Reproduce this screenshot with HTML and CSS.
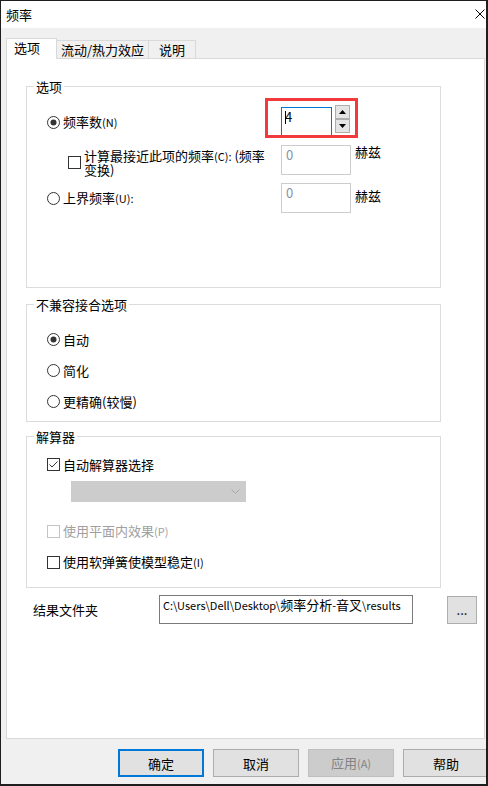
FILE: index.html
```html
<!DOCTYPE html>
<html lang="zh-CN">
<head>
  <meta charset="UTF-8" />
  <title>频率</title>
  <link rel="stylesheet" href="styles.css">
</head>
<body>

<div class="window">
  <div class="titlebar">
    <span class="title">频率</span>
    <svg class="close" width="10" height="10" viewBox="0 0 10 10"><path d="M0.5 0.5 L9.5 9.5 M9.5 0.5 L0.5 9.5" stroke="#000" stroke-width="1" fill="none"/></svg>
  </div>

  <div class="client">
    <div class="tabs">
      <div class="tab active">选项</div>
      <div class="tab t2">流动/热力效应</div>
      <div class="tab t3">说明</div>
    </div>

    <div class="panel">
      <fieldset class="group g1">
        <legend>选项</legend>
        <div class="group-body">
          <div class="row">
            <div class="opt">
              <svg class="radio" width="13" height="13" viewBox="0 0 13 13"><circle cx="6.5" cy="6.5" r="6" fill="#fff" stroke="#333"/><circle cx="6.5" cy="6.5" r="3" fill="#333"/></svg>
              <span>频率数<span class="acc">(N)</span></span>
            </div>
            <div class="spin">
              <div class="spin-input"><span class="caret"></span>4</div>
              <div class="spin-btns">
                <div class="spin-btn"><svg width="7" height="4" viewBox="0 0 7 4"><path d="M0 4 L3.5 0 L7 4 Z" fill="#000"/></svg></div>
                <div class="spin-btn"><svg width="7" height="4" viewBox="0 0 7 4"><path d="M0 0 L3.5 4 L7 0 Z" fill="#000"/></svg></div>
              </div>
              <div class="highlight"></div>
            </div>
          </div>

          <div class="row gap">
            <div class="opt sub">
              <svg class="check" width="13" height="13" viewBox="0 0 13 13"><rect x="0.5" y="0.5" width="12" height="12" fill="#fff" stroke="#333"/></svg>
              <span class="wrap">计算最接近此项的频率<span class="acc">(C):</span> (频率<br>变换)</span>
            </div>
            <div class="field">
              <div class="box">0</div>
              <span class="unit">赫兹</span>
            </div>
          </div>

          <div class="row gap">
            <div class="opt">
              <svg class="radio" width="13" height="13" viewBox="0 0 13 13"><circle cx="6.5" cy="6.5" r="6" fill="#fff" stroke="#333"/></svg>
              <span>上界频率<span class="acc">(U):</span></span>
            </div>
            <div class="field">
              <div class="box">0</div>
              <span class="unit low">赫兹</span>
            </div>
          </div>
        </div>
      </fieldset>

      <fieldset class="group g2">
        <legend>不兼容接合选项</legend>
        <div class="group-body">
          <div class="line">
            <svg class="radio" width="13" height="13" viewBox="0 0 13 13"><circle cx="6.5" cy="6.5" r="6" fill="#fff" stroke="#333"/><circle cx="6.5" cy="6.5" r="3" fill="#333"/></svg>
            <span>自动</span>
          </div>
          <div class="line">
            <svg class="radio" width="13" height="13" viewBox="0 0 13 13"><circle cx="6.5" cy="6.5" r="6" fill="#fff" stroke="#333"/></svg>
            <span>简化</span>
          </div>
          <div class="line">
            <svg class="radio" width="13" height="13" viewBox="0 0 13 13"><circle cx="6.5" cy="6.5" r="6" fill="#fff" stroke="#333"/></svg>
            <span>更精确(较慢)</span>
          </div>
        </div>
      </fieldset>

      <fieldset class="group g3">
        <legend>解算器</legend>
        <div class="group-body">
          <div class="line">
            <svg class="check" width="13" height="13" viewBox="0 0 13 13"><rect x="0.5" y="0.5" width="12" height="12" fill="#fff" stroke="#333"/><polyline points="2.5,6.5 5,9 10.5,3.5" fill="none" stroke="#333"/></svg>
            <span>自动解算器选择</span>
          </div>
          <div class="combo">
            <svg width="9" height="5" viewBox="0 0 9 5"><polyline points="0.5,0.5 4.5,4.5 8.5,0.5" fill="none" stroke="#a6a6a6"/></svg>
          </div>
          <div class="line disabled">
            <svg class="check" width="13" height="13" viewBox="0 0 13 13"><rect x="0.5" y="0.5" width="12" height="12" fill="#fff" stroke="#c4c4c4"/></svg>
            <span>使用平面内效果<span class="acc">(P)</span></span>
          </div>
          <div class="line last">
            <svg class="check" width="13" height="13" viewBox="0 0 13 13"><rect x="0.5" y="0.5" width="12" height="12" fill="#fff" stroke="#333"/></svg>
            <span>使用软弹簧使模型稳定<span class="acc">(I)</span></span>
          </div>
        </div>
      </fieldset>

      <div class="folder">
        <span class="folder-label">结果文件夹</span>
        <div class="path"><span class="lat">C:\Users\Dell\Desktop\</span>频率分析<span class="lat">-</span>音叉<span class="lat">\results</span></div>
        <button class="browse">...</button>
      </div>
    </div>

    <div class="actions">
      <button class="btn default">确定</button>
      <button class="btn">取消</button>
      <button class="btn" disabled>应用<span class="acc">(A)</span></button>
      <button class="btn">帮助</button>
    </div>
  </div>
</div>

</body>
</html>
```

FILE: styles.css
```css
body {
  margin: 0;
  font-family: "Noto Sans CJK SC", "Microsoft YaHei", sans-serif;
  font-size: 13px;
  line-height: 17px;
  color: #000;
}

.window {
  width: 488px;
  height: 786px;
  box-sizing: border-box;
  border: solid #1e1e1e;
  border-width: 1px 2px 2px 1px;
  background: #f0f0f0;
  overflow: hidden;
}

.titlebar {
  height: 27px;
  background: #fff;
  display: flex;
  align-items: center;
  justify-content: space-between;
  padding: 0 1px 0 5px;
}

.close {
  margin-top: -1px;
}

.client {
  padding: 10px 1px 0 5px;
}

/* tabs */
.tabs {
  display: flex;
  align-items: flex-end;
  height: 20px;
}

.tab {
  height: 18px;
  box-sizing: border-box;
  border: 1px solid #d9d9d9;
  border-left: none;
  border-bottom: none;
  text-align: center;
  line-height: 17px;
  white-space: nowrap;
}

.tab.active {
  width: 51px;
  height: 21px;
  margin-bottom: -1px;
  padding-right: 9px;
  border-left: 1px solid #d9d9d9;
  background: #fff;
  line-height: 18px;
  position: relative;
  z-index: 1;
}

.tab.t2 {
  width: 92px;
}

.tab.t3 {
  width: 47px;
}

.panel {
  height: 681px;
  box-sizing: border-box;
  background: #fff;
  border: 1px solid #d9d9d9;
  padding: 19px 0 0 19px;
}

/* group boxes */
.group {
  width: 415px;
  box-sizing: border-box;
  margin: 0;
  padding: 0;
  border: 1px solid #dcdcdc;
}

.group legend {
  margin-left: 7px;
  padding: 0 2px;
  line-height: 17px;
}

.g1 .group-body {
  padding: 12px 0 74px 20px;
}

.g2 {
  margin-top: 8px;
}

.g2 .group-body {
  display: flex;
  flex-direction: column;
  gap: 15px;
  padding: 18px 0 12px 20px;
}

.g3 {
  margin-top: 6px;
}

.g3 .group-body {
  padding: 11px 0 17px 20px;
}

.row {
  display: flex;
  height: 30px;
}

.row.gap {
  margin-top: 8px;
}

.opt {
  width: 234px;
  box-sizing: border-box;
  display: flex;
  align-items: center;
  gap: 3px;
  white-space: nowrap;
}

.opt.sub {
  padding-left: 21px;
  align-self: flex-end;
  margin-bottom: -1px;
}

.wrap {
  line-height: 13px;
}

.acc {
  font-size: 11px;
}

.lat {
  font-size: 11px;
}

.radio, .check {
  flex-shrink: 0;
  display: block;
}

.line {
  display: flex;
  align-items: center;
  gap: 3px;
  height: 16px;
  white-space: nowrap;
}

.line.disabled {
  color: #a0a0a0;
  margin-top: 21px;
}

.line.last {
  margin-top: 15px;
}

/* spinner */
.spin {
  position: relative;
  display: flex;
  gap: 3px;
}

.spin-input {
  width: 51px;
  height: 30px;
  box-sizing: border-box;
  border: 1px solid #0078d7;
  padding-left: 3px;
}

.caret {
  display: inline-block;
  width: 1px;
  height: 13px;
  background: #000;
  vertical-align: -2px;
  margin-right: -1px;
}

.spin-btns {
  margin-top: -2px;
  display: flex;
  flex-direction: column;
}

.spin-btn {
  width: 15px;
  height: 14px;
  box-sizing: border-box;
  border: 1px solid #adadad;
  background: #e5e5e5;
  display: flex;
  align-items: center;
  justify-content: center;
}

.highlight {
  position: absolute;
  left: -16px;
  top: -9px;
  width: 93px;
  height: 40px;
  box-sizing: border-box;
  border: 3px solid #f23a3c;
}

.field {
  display: flex;
  gap: 4px;
  align-items: flex-start;
}

.box {
  width: 70px;
  height: 30px;
  box-sizing: border-box;
  border: 1px solid #cccccc;
  padding-left: 4px;
  color: #8793a8;
}

.unit {
  margin-top: -2px;
}

.unit.low {
  margin-top: 4px;
}

.combo {
  width: 175px;
  height: 21px;
  box-sizing: border-box;
  margin: 9px 0 0 24px;
  background: #cccccc;
  border: 1px solid #cccccc;
  display: flex;
  align-items: center;
  justify-content: flex-end;
  padding-right: 5px;
}

/* result folder */
.folder {
  display: flex;
  align-items: center;
  height: 29px;
  margin-top: 7px;
  padding-left: 7px;
}

.folder-label {
  width: 126px;
}

.path {
  width: 254px;
  height: 29px;
  box-sizing: border-box;
  border: 1px solid #7a7a7a;
  padding-left: 3px;
  white-space: nowrap;
  overflow: hidden;
}

.browse {
  width: 30px;
  height: 28px;
  margin: 1px 0 0 34px;
  align-self: flex-start;
  padding: 0;
  border: 1px solid #adadad;
  background: #e1e1e1;
  font: inherit;
  line-height: 20px;
}

/* bottom buttons */
.actions {
  display: flex;
  gap: 9px;
  margin-top: 10px;
  padding-left: 112px;
}

.btn {
  flex-shrink: 0;
  width: 86px;
  height: 28px;
  box-sizing: border-box;
  padding: 0;
  border: 1px solid #adadad;
  background: #e1e1e1;
  font: inherit;
  color: #000;
}

.btn.default {
  border: 2px solid #0078d7;
}

.btn:disabled {
  background: #cccccc;
  border-color: #bfbfbf;
  color: #838383;
}
```
